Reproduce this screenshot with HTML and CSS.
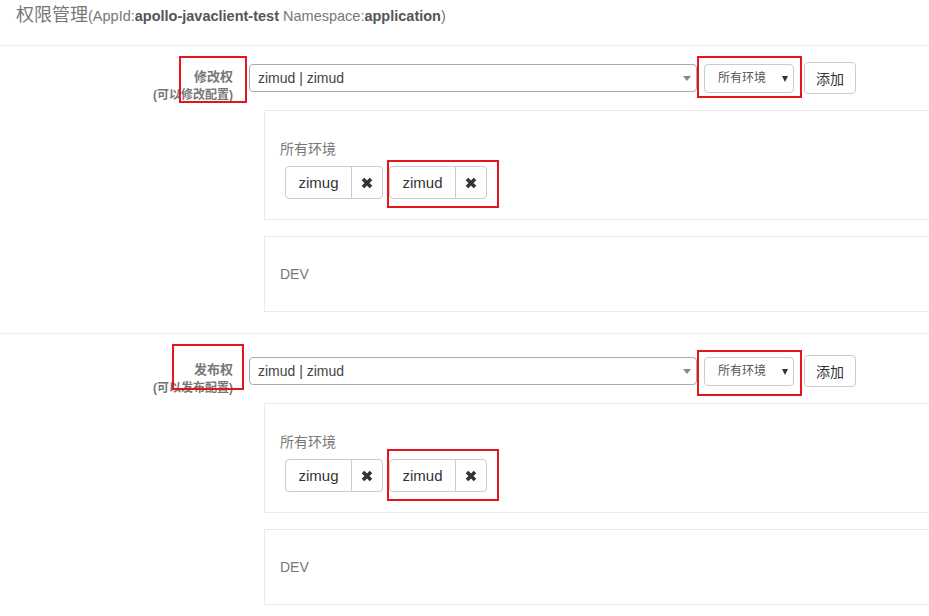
FILE: index.html
```html
<!DOCTYPE html>
<html>
<head>
    <title>权限管理</title>
    <link rel="stylesheet" href="styles.css">
</head>
<body>
<div class="page-header">
    <span class="title-main">权限管理</span><span class="title-sub">(AppId:<b>apollo-javaclient-test</b> Namespace:<b>application</b>)</span>
</div>

<!-- 修改权 -->
<div class="perm-section">
    <div class="perm-label">
        <div class="perm-name">修改权</div>
        <div class="perm-hint">(可以修改配置)</div>
    </div>
    <div class="perm-body">
        <div class="add-row">
            <div class="user-select">zimud | zimud<span class="select-arrow"></span></div>
            <div class="env-select">所有环境<span class="env-arrow"></span></div>
            <button class="btn-add">添加</button>
        </div>
        <div class="env-panel">
            <div class="env-title">所有环境</div>
            <div class="tags">
                <div class="tag"><span class="tag-name">zimug</span><span class="tag-remove"><svg width="12" height="12" viewBox="0 0 12 12"><path d="M2 2 L10 10 M10 2 L2 10" stroke="#333" stroke-width="3.6"/></svg></span></div>
                <div class="tag"><span class="tag-name">zimud</span><span class="tag-remove"><svg width="12" height="12" viewBox="0 0 12 12"><path d="M2 2 L10 10 M10 2 L2 10" stroke="#333" stroke-width="3.6"/></svg></span></div>
            </div>
        </div>
        <div class="env-panel env-empty">DEV</div>
    </div>
    <div class="mark mark-1"></div>
    <div class="mark mark-2"></div>
    <div class="mark mark-3"></div>
</div>

<!-- 发布权 -->
<div class="perm-section">
    <div class="perm-label">
        <div class="perm-name">发布权</div>
        <div class="perm-hint">(可以发布配置)</div>
    </div>
    <div class="perm-body">
        <div class="add-row">
            <div class="user-select">zimud | zimud<span class="select-arrow"></span></div>
            <div class="env-select">所有环境<span class="env-arrow"></span></div>
            <button class="btn-add">添加</button>
        </div>
        <div class="env-panel">
            <div class="env-title">所有环境</div>
            <div class="tags">
                <div class="tag"><span class="tag-name">zimug</span><span class="tag-remove"><svg width="12" height="12" viewBox="0 0 12 12"><path d="M2 2 L10 10 M10 2 L2 10" stroke="#333" stroke-width="3.6"/></svg></span></div>
                <div class="tag"><span class="tag-name">zimud</span><span class="tag-remove"><svg width="12" height="12" viewBox="0 0 12 12"><path d="M2 2 L10 10 M10 2 L2 10" stroke="#333" stroke-width="3.6"/></svg></span></div>
            </div>
        </div>
        <div class="env-panel env-empty">DEV</div>
    </div>
    <div class="mark mark-4"></div>
    <div class="mark mark-5"></div>
    <div class="mark mark-6"></div>
</div>
</body>
</html>
```

FILE: styles.css
```css
body {
    font-family: "Liberation Sans", "Noto Sans CJK SC", sans-serif;
    font-size: 14px;
    color: #333;
    background-color: #fff;
    margin: 0;
    padding: 0;
    overflow-x: hidden;
}

/* header */
.page-header {
    height: 46px;
    box-sizing: border-box;
    padding: 4px 0 0 16px;
    line-height: 22px;
    border-bottom: 1px solid #eee;
    color: #777;
}

.title-main {
    font-size: 18px;
}

.title-sub {
    font-size: 14.5px;
}

.title-sub b {
    color: #555;
}

/* permission sections */
.perm-section {
    position: relative;
    display: flex;
    padding: 16px 0 21px 0;
    border-bottom: 1px solid #eee;
}

.perm-section + .perm-section {
    padding-top: 21px;
    border-bottom: none;
}

.perm-label {
    width: 233px;
    flex: none;
    text-align: right;
    padding-top: 6px;
    color: #777;
    font-weight: bold;
}

.perm-name {
    font-size: 13px;
    line-height: 18px;
}

.perm-hint {
    font-size: 12px;
    line-height: 18px;
}

.perm-body {
    flex: none;
    width: 720px;
    margin-left: 16px;
}

.add-row {
    display: flex;
    align-items: center;
    height: 32px;
}

.user-select {
    position: relative;
    width: 448px;
    height: 28px;
    box-sizing: border-box;
    border: 1px solid #aaa;
    border-radius: 4px;
    padding-left: 8px;
    line-height: 26px;
    color: #444;
}

.select-arrow {
    position: absolute;
    right: 5px;
    top: 11px;
    border-style: solid;
    border-width: 5px 4px 0 4px;
    border-color: #888 transparent transparent transparent;
}

.env-select {
    position: relative;
    margin-left: 7px;
    width: 90px;
    height: 29px;
    box-sizing: border-box;
    border: 1px solid #ccc;
    border-radius: 4px;
    padding-left: 13px;
    font-size: 12px;
    line-height: 27px;
    color: #555;
}

.env-arrow {
    position: absolute;
    right: 5px;
    top: 11px;
    border-style: solid;
    border-width: 6px 3.5px 0 3.5px;
    border-color: #333 transparent transparent transparent;
}

.btn-add {
    margin-left: 10px;
    width: 52px;
    height: 32px;
    padding: 0;
    background-color: #fff;
    border: 1px solid #ccc;
    border-radius: 4px;
    font-family: inherit;
    font-size: 14px;
    color: #333;
}

/* env panels */
.env-panel {
    margin: 16px 0 0 15px;
    border: 1px solid #e9e9ef;
    padding: 28px 15px 20px 15px;
}

.env-title {
    font-size: 14px;
    line-height: 20px;
    color: #777;
    margin-bottom: 7px;
}

.env-empty {
    padding: 27px 15px;
    line-height: 20px;
    color: #777;
}

.tags {
    display: flex;
    gap: 6px;
    margin-left: 5px;
}

.tag {
    display: flex;
    height: 33px;
    box-sizing: border-box;
    border: 1px solid #ccc;
    border-radius: 4px;
}

.tag-name {
    width: 65px;
    text-align: center;
    line-height: 31px;
    font-size: 15px;
    color: #333;
    border-right: 1px solid #ccc;
}

.tag-remove {
    width: 30px;
    display: flex;
    align-items: center;
    justify-content: center;
}

/* red annotation boxes */
.mark {
    position: absolute;
    border: 2px solid #e3161e;
    box-sizing: border-box;
}

.mark-1 { left: 179px; top: 10px; width: 68px; height: 47px; }
.mark-2 { left: 697px; top: 10px; width: 105px; height: 42px; }
.mark-3 { left: 387px; top: 114px; width: 112px; height: 48px; }
.mark-4 { left: 172px; top: 10px; width: 72px; height: 46px; }
.mark-5 { left: 697px; top: 16px; width: 105px; height: 46px; }
.mark-6 { left: 387px; top: 115px; width: 112px; height: 52px; }
```
